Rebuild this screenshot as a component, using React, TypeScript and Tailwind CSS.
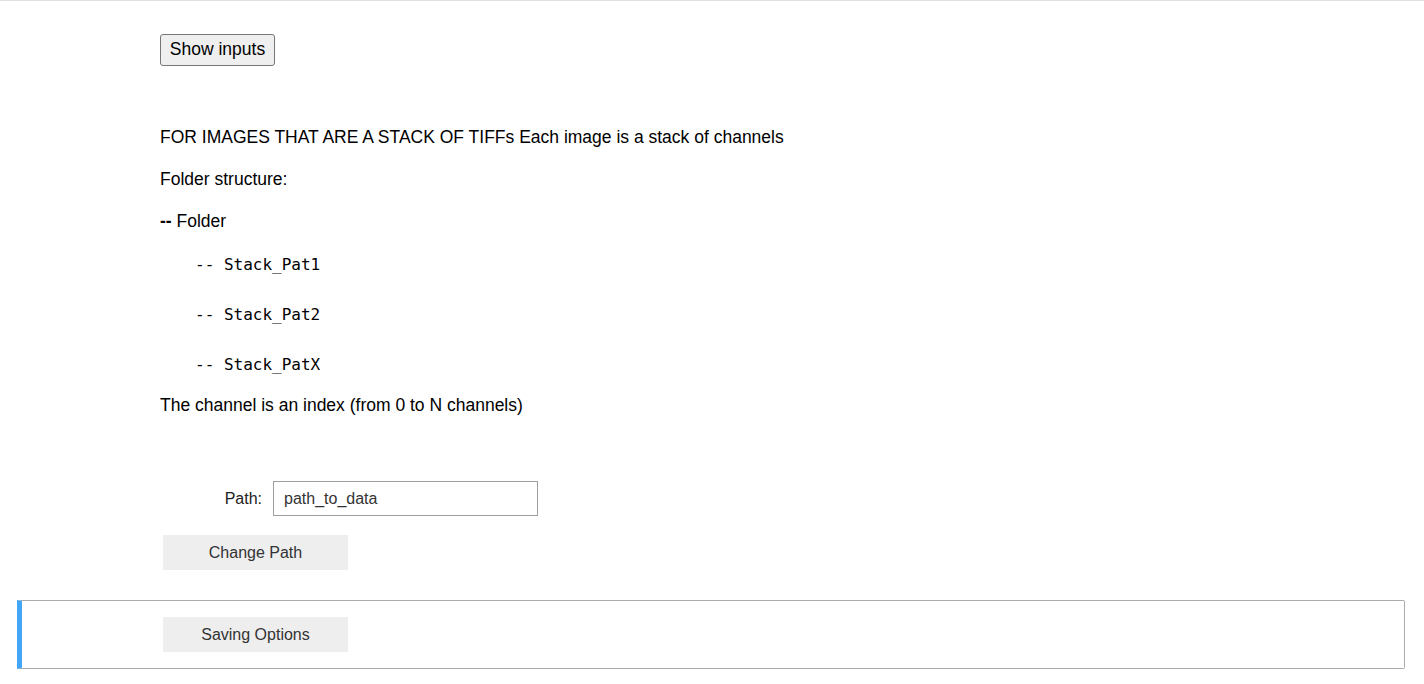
import React from "react";

function App() {
  const codeLines = ["-- Stack_Pat1", "-- Stack_Pat2", "-- Stack_PatX"];

  return (
    <div className="min-h-screen bg-white border-t border-[#e0e0e0] font-['Liberation_Sans',Arial,sans-serif] text-[16px] text-black">
      <div className="pl-[160px] pt-[33px]">
        <button
          type="button"
          className="h-[32px] w-[115px] rounded-[3px] border border-[#767676] bg-[#efefef] text-[17.5px] leading-none text-black"
        >
          Show inputs
        </button>
      </div>

      <div className="pl-[160px] pt-[58px] text-[17.5px]">
        <p className="leading-[26px] mb-4">
          FOR IMAGES THAT ARE A STACK OF TIFFs Each image is a stack of channels
        </p>
        <p className="leading-[26px] mb-4">Folder structure:</p>
        <p className="leading-[26px]">
          <b className="font-bold">--</b> Folder
        </p>
        <div className="pl-[35px] pt-[18px]">
          {codeLines.map((line, i) => (
            <pre
              key={line}
              className={
                "font-['DejaVu_Sans_Mono',monospace] text-[16px] leading-[26px] " +
                (i < codeLines.length - 1 ? "mb-6" : "")
              }
            >
              {line}
            </pre>
          ))}
        </div>
        <p className="leading-[26px] mt-[14px]">
          The channel is an index (from 0 to N channels)
        </p>
      </div>

      <div className="pl-[160px] pt-[63px] flex items-center">
        <label htmlFor="path" className="w-[102px] text-right text-[#222]">
          Path:
        </label>
        <input
          id="path"
          defaultValue="path_to_data"
          className="ml-[11px] h-[35px] w-[265px] border border-[#9e9e9e] px-[10px] text-[16px] text-[#333] outline-none"
        />
      </div>

      <div className="pl-[163px] pt-[19px]">
        <button
          type="button"
          className="h-[35px] w-[185px] bg-[#eeeeee] text-[16px] text-[#333]"
        >
          Change Path
        </button>
      </div>

      <div className="ml-[17px] mr-[19px] mt-[30px] rounded-r-[2px] border border-l-[5px] border-[#ababab] border-l-[#42a5f5] py-4">
        <button
          type="button"
          className="ml-[141px] h-[35px] w-[185px] bg-[#eeeeee] text-[16px] text-[#333]"
        >
          Saving Options
        </button>
      </div>
    </div>
  );
}

export default App;
